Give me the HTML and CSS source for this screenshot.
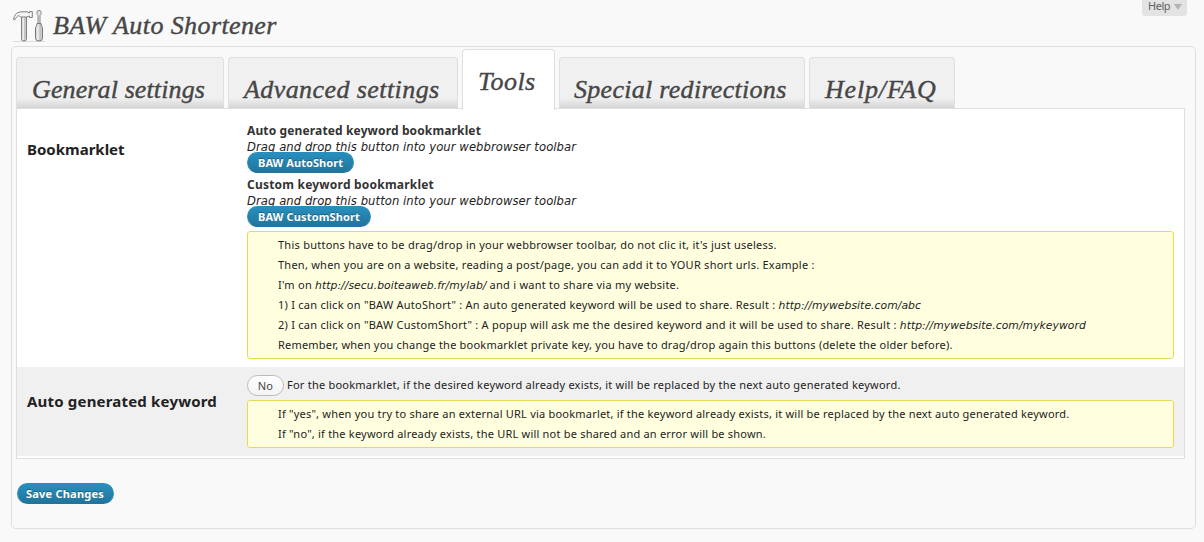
FILE: index.html
```html
<!DOCTYPE html>
<html lang="en">
<head>
<meta charset="utf-8">
<title>BAW Auto Shortener</title>
<link rel="stylesheet" href="styles.css">
</head>
<body>
<header class="header">
  <svg class="tools-icon" width="34" height="34" viewBox="0 0 34 34">
    <defs>
      <linearGradient id="metal" x1="0" x2="1" y1="0" y2="0">
        <stop offset="0" stop-color="#c4c4c4"/><stop offset=".35" stop-color="#f4f4f4"/><stop offset=".65" stop-color="#bbb"/><stop offset="1" stop-color="#ddd"/>
      </linearGradient>
    </defs>
    <path d="M1 32.500H33" stroke="#ddd"/>
    <path d="M9.500 7.500H14.500V30.500Q14.500 32 12 32Q9.500 32 9.500 30.500Z" fill="url(#metal)" stroke="#808080"/>
    <path d="M1.500 10.500C2 6 4.500 3.500 8.500 2.800H15L17.500 4V2.500H20.300V8.500H17.500V7L15 8H8.500L7 6.500C5 7.300 4 8.500 3 10.500Z" fill="#f4f4f4" stroke="#808080"/>
    <path d="M24.900 3.500Q25 1.300 27 1.300Q29 1.300 29.100 3.500Q29 6 28 6.500V15H26V6.500Q25 6 24.900 3.500Z" fill="#e2e2e2" stroke="#888"/>
    <path d="M25 14.500H29Q29 17 30.500 18.500V29.500Q30.500 32 27 32Q23.500 32 23.500 29.500V18.500Q25 17 25 14.500Z" fill="url(#metal)" stroke="#777"/>
  </svg>
  <h1 class="title">BAW Auto Shortener</h1>
  <div class="help">Help<span class="arrow"></span></div>
</header>
<main class="panel">
  <nav class="tabs">
    <a class="tab general">General settings</a>
    <a class="tab advanced">Advanced settings</a>
    <a class="tab tools active">Tools</a>
    <a class="tab special">Special redirections</a>
    <a class="tab faq">Help/FAQ</a>
  </nav>
  <section class="settings">
    <div class="row bookmarklets">
      <h2 class="label label-book">Bookmarklet</h2>
      <div class="field">
        <div class="bookmark">
          <strong class="name">Auto generated keyword bookmarklet</strong>
          <em class="hint">Drag and drop this button into your webbrowser toolbar</em>
          <a class="button auto">BAW AutoShort</a>
        </div>
        <div class="bookmark">
          <strong class="name name-custom">Custom keyword bookmarklet</strong>
          <em class="hint">Drag and drop this button into your webbrowser toolbar</em>
          <a class="button custom">BAW CustomShort</a>
        </div>
        <div class="note instructions">
          <p>This buttons have to be drag/drop in your webbrowser toolbar, do not clic it, it's just useless.</p>
          <p>Then, when you are on a website, reading a post/page, you can add it to YOUR short urls. Example :</p>
          <p>I'm on <em>http://secu.boiteaweb.fr/mylab/</em> and i want to share via my website.</p>
          <p>1) I can click on "BAW AutoShort" : An auto generated keyword will be used to share. Result : <em>http://mywebsite.com/abc</em></p>
          <p>2) I can click on "BAW CustomShort" : A popup will ask me the desired keyword and it will be used to share. Result : <em>http://mywebsite.com/mykeyword</em></p>
          <p class="reminder">Remember, when you change the bookmarklet private key, you have to drag/drop again this buttons (delete the older before).</p>
        </div>
      </div>
    </div>
    <div class="row keyword">
      <h2 class="label">Auto generated keyword</h2>
      <div class="field">
        <div class="option"><span class="toggle">No</span><span>For the bookmarklet, if the desired keyword already exists, it will be replaced by the next auto generated keyword.</span></div>
        <div class="note">
          <p>If "yes", when you try to share an external URL via bookmarlet, if the keyword already exists, it will be replaced by the next auto generated keyword.</p>
          <p>If "no", if the keyword already exists, the URL will not be shared and an error will be shown.</p>
        </div>
      </div>
    </div>
  </section>
  <button class="button save">Save Changes</button>
</main>
</body>
</html>
```
FILE: styles.css
```css
* { box-sizing: border-box; }
body {
  margin: 0;
  height: 542px;
  overflow: hidden;
  background: #f9f9f9;
  color: #222;
  font: 11px/20px "Noto Sans", sans-serif;
  letter-spacing: 0.22px;
}
h1, h2, p { margin: 0; }
.header {
  display: flex;
  align-items: flex-start;
  height: 46px;
  padding: 0 17px 0 12px;
}
.tools-icon { margin-top: 9px; }
.title {
  flex: 1;
  margin: 8px 0 0 7px;
  font: italic 26px/35px "Liberation Serif", serif;
  letter-spacing: 0.4px;
  color: #464646;
  -webkit-text-stroke: 0.4px #464646;
}
.help {
  display: flex;
  align-items: center;
  width: 45px;
  height: 16px;
  padding: 0 0 5px 6px;
  border-radius: 0 0 3px 3px;
  background: #e3e3e3;
  color: #606060;
  letter-spacing: -0.45px;
}
.arrow {
  margin: 3px 0 0 4px;
  border: solid transparent;
  border-width: 6px 4px 0;
  border-top-color: #b4b4b4;
}
.panel {
  width: 1185px;
  height: 483px;
  margin-left: 11px;
  padding: 2px 10px 0 4px;
  border: 1px solid #dfdfdf;
  border-radius: 5px;
}
.tabs {
  display: flex;
  align-items: flex-end;
  gap: 4px;
  height: 59px;
}
.tab {
  height: 51px;
  padding: 14px 0 0 14px;
  border: 1px solid #dfdfdf;
  border-bottom: 0;
  border-radius: 4px 4px 0 0;
  background: linear-gradient(#f0f0f0 80%, #d5d5d5);
  color: #464646;
  font: italic 26px/36px "Liberation Serif", serif;
  white-space: nowrap;
  -webkit-text-stroke: 0.4px #464646;
}
.general { width: 208px; letter-spacing: 0.116px; padding-left: 15px; }
.advanced { width: 230px; letter-spacing: 0.42px; padding-left: 15px; }
.tools { width: 93px; letter-spacing: 0.45px; padding-left: 15px; }
.special { width: 246px; letter-spacing: 0.29px; }
.faq { width: 146px; letter-spacing: 0.83px; padding-left: 15px; }
.active {
  position: relative;
  height: 61px;
  margin-bottom: -2px;
  background: #fff;
}
.settings {
  width: 1169px;
  height: 351px;
  border: 1px solid #dfdfdf;
  background: #fff;
}
.row {
  display: flex;
  padding: 0 10px;
}
.bookmarklets { height: 258px; padding-top: 14px; }
.keyword { height: 89px; padding-top: 7px; background: #f0f0f0; }
.label {
  width: 220px;
  padding-top: 17px;
  font-size: 15px;
  line-height: 20px;
  letter-spacing: 0.186px;
}
.label-book { padding-top: 16px; letter-spacing: 0; }
.field { width: 927px; }
.bookmark {
  display: flex;
  flex-direction: column;
  align-items: flex-start;
  height: 54px;
}
.name, .hint { line-height: 16px; white-space: nowrap; }
.name { color: #333; font-size: 12px; letter-spacing: 0.132px; }
.name-custom { letter-spacing: 0.21px; }
.hint { font: oblique 11.6px/16px "DejaVu Sans", sans-serif; letter-spacing: 0.065px; }
.button {
  position: relative;
  height: 21px;
  margin-top: -3px;
  padding: 0 0 0 10px;
  border: 1px solid #298cba;
  border-bottom-color: #21759b;
  border-radius: 11px;
  background: linear-gradient(#288fbe, #21759b);
  color: #fff;
  font: bold 11px/20px "Noto Sans", sans-serif;
  text-align: left;
  text-shadow: 0 -1px 0 rgba(0, 0, 0, 0.3);
  white-space: nowrap;
}
.auto { width: 107px; letter-spacing: 0.064px; }
.custom { width: 124px; letter-spacing: 0.142px; }
.save {
  display: block;
  width: 97px;
  margin: 24px 0 0 1px;
  padding-left: 8px;
  letter-spacing: 0.22px;
}
.note {
  padding: 3px 30px;
  border: 1px solid #e6db55;
  border-radius: 3px;
  background: #ffffe0;
  letter-spacing: 0.21px;
  white-space: nowrap;
}
.instructions { letter-spacing: 0.25px; }
.reminder { letter-spacing: 0.21px; }
.note em { font: oblique 10.8px/1 "DejaVu Sans", sans-serif; letter-spacing: 0.04px; }
.option {
  display: flex;
  gap: 3px;
  margin: 1px 0 4px;
  letter-spacing: 0.23px;
  white-space: nowrap;
}
.toggle {
  width: 37px;
  height: 21px;
  border: 1px solid #bbb;
  border-radius: 11px;
  background: linear-gradient(#fff, #f4f4f4);
  color: #464646;
  line-height: 20px;
  text-align: center;
}
```
